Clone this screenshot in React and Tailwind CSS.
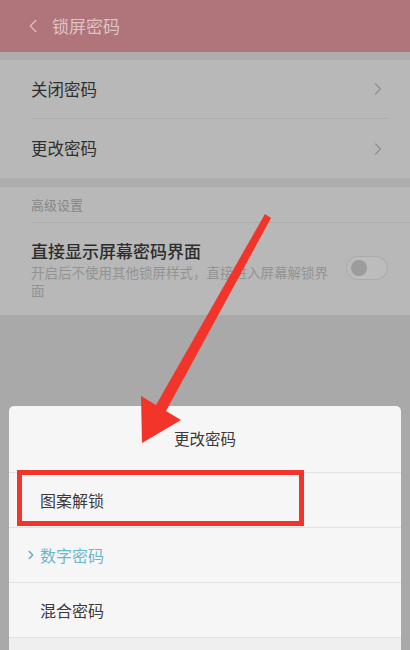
import { ChevronLeft, ChevronRight } from 'lucide-react';

const font = { fontFamily: '"Noto Sans CJK SC", "Noto Sans", sans-serif' };

const ListRow = ({ label, divider }) => (
  <div className="flex h-[59px] shrink-0 items-center pl-[31px] pr-[22px]">
    <div
      className={`flex h-full flex-1 items-center justify-between ${divider ? 'border-b border-[#acacac]' : ''}`}
    >
      <span className="text-[16.5px] text-[#2f2f2f]">{label}</span>
      <ChevronRight className="h-[20px] w-[20px] text-[#8e8e8e]" strokeWidth={1.3} />
    </div>
  </div>
);

const SheetRow = ({ label, active }) => (
  <div className="flex h-[55px] shrink-0 items-center border-b border-[#e2e2e2] pl-[31px]">
    {active ? (
      <>
        <ChevronRight className="-ml-[16px] mr-[2px] h-[14px] w-[14px] text-[#5aa9c2]" strokeWidth={2.4} />
        <span className="text-[16px] text-[#68b6cf]">{label}</span>
      </>
    ) : (
      <span className="text-[16px] text-[#3a3a3a]">{label}</span>
    )}
  </div>
);

export default function App() {
  return (
    <div className="relative flex h-[650px] w-full flex-col overflow-hidden bg-[#a9a9a9]" style={font}>
      {/* header */}
      <div className="flex h-[52px] shrink-0 items-center bg-[#b0747b] pl-[22px]">
        <ChevronLeft className="h-[22px] w-[22px] text-[#d9bcc0]" strokeWidth={1.6} />
        <span className="ml-[8px] text-[17px] text-[#dcc3c6]">锁屏密码</span>
      </div>
      <div className="h-[8px] shrink-0 bg-[#adadad]" />

      {/* password section */}
      <div className="shrink-0 bg-[#b8b8b8]">
        <ListRow label="关闭密码" divider />
        <ListRow label="更改密码" />
      </div>
      <div className="h-[9px] shrink-0 bg-[#adadad]" />

      {/* advanced section */}
      <div className="h-[128px] shrink-0 bg-[#b8b8b8] pl-[31px]">
        <div className="flex h-[36px] items-center border-b border-[#acacac]">
          <span className="text-[13px] text-[#878787]">高级设置</span>
        </div>
        <div className="flex items-start pr-[22px] pt-[16px]">
          <div className="w-[300px]">
            <div className="text-[17px] font-medium leading-[24px] text-[#2d2d2d]">直接显示屏幕密码界面</div>
            <div className="text-[13.5px] leading-[18px] text-[#939393]">
              开启后不使用其他锁屏样式，直接进入屏幕解锁界面
            </div>
          </div>
          <div className="ml-auto mt-[17px] flex h-[24px] w-[42px] items-center rounded-full border border-[#aaaaaa] bg-[#bcbcbc] pl-[4px]">
            <div className="h-[16px] w-[16px] rounded-full bg-[#9c9c9c]" />
          </div>
        </div>
      </div>

      <div className="h-[91px] shrink-0" />

      {/* bottom sheet */}
      <div className="mx-[9px] flex shrink-0 flex-col rounded-t-[5px] bg-[#f6f6f6]">
        <div className="flex h-[67px] shrink-0 items-center justify-center border-b border-[#e2e2e2]">
          <span className="text-[15.5px] text-[#3a3a3a]">更改密码</span>
        </div>
        <SheetRow label="图案解锁" />
        <SheetRow label="数字密码" active />
        <SheetRow label="混合密码" />
        <div className="h-[20px] shrink-0 bg-[#efefef]" />
      </div>

      {/* annotation: red box */}
      <div className="pointer-events-none absolute left-[17px] top-[470px] h-[56px] w-[287px] border-[5px] border-[#f2342b]" />

      {/* annotation: arrow */}
      <svg className="pointer-events-none absolute left-0 top-0" width="410" height="650" viewBox="0 0 410 650">
        <polygon
          points="265,214 271,218 166,411 181,420 142,443 141,396 156,405"
          fill="#f2342b"
        />
      </svg>
    </div>
  );
}
